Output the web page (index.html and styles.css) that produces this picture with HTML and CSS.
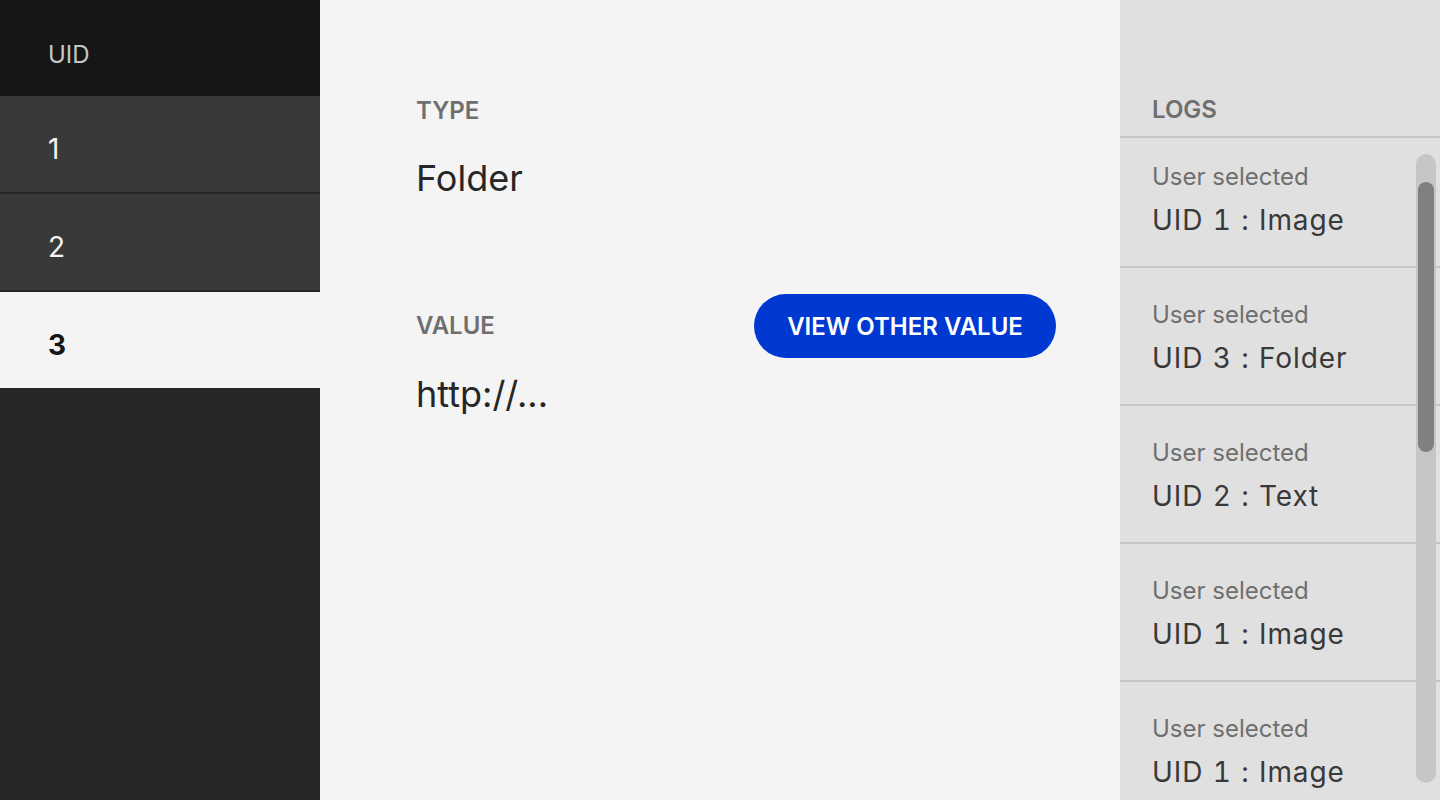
FILE: index.html
```html
<!DOCTYPE html>
<html lang="en">
<head>
<meta charset="utf-8">
<title>UID Viewer</title>
<link rel="stylesheet" href="styles.css">
</head>
<body>
<div class="app">
  <aside class="sidebar">
    <div class="sidebar-head">UID</div>
    <div class="uid-row">1</div>
    <div class="uid-row">2</div>
    <div class="uid-row is-active">3</div>
  </aside>
  <main class="detail">
    <section class="field field-type">
      <div class="label">TYPE</div>
      <div class="value">Folder</div>
    </section>
    <section class="field field-value">
      <div class="field-head">
        <div class="label">VALUE</div>
        <button class="btn-primary" type="button">VIEW OTHER VALUE</button>
      </div>
      <div class="value value-url">http://...</div>
    </section>
  </main>
  <aside class="logs">
    <div class="logs-head"><span class="label">LOGS</span></div>
    <div class="logs-viewport">
      <div class="logs-list">
        <div class="log-item"><div class="log-meta">User selected</div><div class="log-text">UID 1 : Image</div></div>
        <div class="log-item"><div class="log-meta">User selected</div><div class="log-text">UID 3 : Folder</div></div>
        <div class="log-item"><div class="log-meta">User selected</div><div class="log-text">UID 2 : Text</div></div>
        <div class="log-item"><div class="log-meta">User selected</div><div class="log-text">UID 1 : Image</div></div>
        <div class="log-item"><div class="log-meta">User selected</div><div class="log-text">UID 1 : Image</div></div>
      </div>
    </div>
    <div class="scroll-track"><div class="scroll-thumb"></div></div>
  </aside>
</div>
</body>
</html>
```

FILE: styles.css
```css
* { box-sizing: border-box; }
html, body {
  margin: 0;
  padding: 0;
  height: 100%;
  overflow: hidden;
}
body {
  font-family: Inter, "Noto Sans", "Liberation Sans", sans-serif;
  background: #f4f4f4;
  color: #262626;
}
.app {
  display: flex;
  height: 800px;
  width: 1440px;
}

/* Sidebar */
.sidebar {
  width: 320px;
  flex: 0 0 320px;
  background: #262626;
  display: flex;
  flex-direction: column;
}
.sidebar-head {
  height: 96px;
  background: #161616;
  color: #c6c6c6;
  font-size: 24px;
  display: flex;
  align-items: center;
  padding: 12px 0 0 48px;
}
.uid-row {
  height: 98px;
  background: #393939;
  border-bottom: 2px solid #262626;
  color: #f4f4f4;
  font-size: 28px;
  display: flex;
  align-items: center;
  padding: 10px 0 0 48px;
}
.uid-row.is-active {
  background: #f4f4f4;
  color: #161616;
  font-weight: 700;
  height: 96px;
  border-bottom: 0;
  padding-top: 10px;
}

/* Detail */
.detail {
  flex: 1;
  padding: 95px 64px 0 96px;
  display: flex;
  flex-direction: column;
}
.label {
  font-size: 24px;
  line-height: 32px;
  font-weight: 600;
  color: #6f6f6f;
  letter-spacing: 0;
}
.value {
  font-size: 36px;
  line-height: 48px;
  color: #262626;
  margin-top: 27px;
}
.field-value {
  margin-top: 92px;
}
.field-head {
  display: flex;
  align-items: center;
  justify-content: space-between;
}
.btn-primary {
  height: 64px;
  width: 302px;
  border: 0;
  border-radius: 32px;
  background: #0039d1;
  color: #ffffff;
  font-family: inherit;
  font-size: 24px;
  font-weight: 600;
  letter-spacing: 0;
  padding: 0;
  cursor: pointer;
}
.value-url {
  margin-top: 12px;
}

/* Logs */
.logs {
  position: relative;
  width: 320px;
  flex: 0 0 320px;
  background: #e0e0e0;
  display: flex;
  flex-direction: column;
}
.logs-head {
  height: 138px;
  border-bottom: 2px solid #c6c6c6;
  padding: 94px 32px 0 32px;
}
.logs-viewport {
  flex: 1;
  overflow: hidden;
}
.logs-list {
  margin-top: -8px;
}
.log-item {
  height: 138px;
  border-bottom: 2px solid #c6c6c6;
  padding: 31px 32px 0 32px;
}
.log-meta {
  font-size: 24px;
  line-height: 32px;
  color: #6f6f6f;
}
.log-text {
  font-size: 28px;
  line-height: 36px;
  color: #393939;
  margin-top: 9px;
  letter-spacing: 0.9px;
  word-spacing: 1px;
  font-feature-settings: "tnum" 1, "calt" 0;
}
.scroll-track {
  position: absolute;
  left: 296px;
  top: 154px;
  width: 20px;
  height: 629px;
  border-radius: 10px;
  background: #c6c6c6;
}
.scroll-thumb {
  position: absolute;
  left: 2px;
  top: 28px;
  width: 16px;
  height: 270px;
  border-radius: 8px;
  background: #808080;
}
```
